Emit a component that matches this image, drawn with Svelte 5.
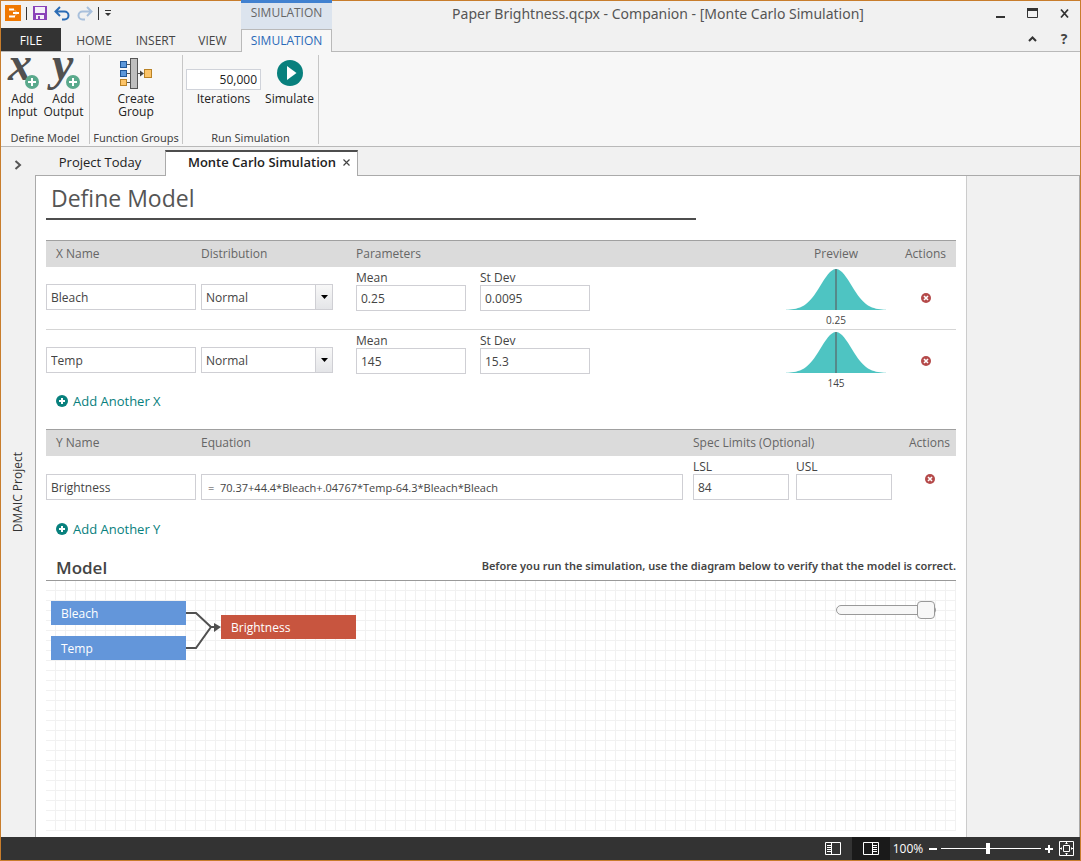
<script>
  let xRows = $state([
    { id: 'bleach', name: 'Bleach', dist: 'Normal', mean: '0.25', sd: '0.0095' },
    { id: 'temp', name: 'Temp', dist: 'Normal', mean: '145', sd: '15.3' }
  ]);
  let yRow = $state({
    name: 'Brightness',
    equation: '=  70.37+44.4*Bleach+.04767*Temp-64.3*Bleach*Bleach',
    lsl: '84',
    usl: ''
  });
  let iterations = $state('50,000');
  let zoom = $state(100);
  let diagramZoom = $state(100);

  const points = [];
  for (let x = 0; x <= 100; x += 2) {
    const z = (x - 50) / 15.3;
    points.push(`${x},${(41 - 41 * Math.exp((-z * z) / 2)).toFixed(2)}`);
  }
  const bell = `M0,41 L${points.join(' ')} L100,41 Z`;
</script>

{#snippet addBadge(x, y)}
  <circle cx={x} cy={y} r="7" fill="#5aa98c" />
  <path d="M{x - 4} {y}h8M{x} {y - 4}v8" stroke="#fff" stroke-width="2" />
{/snippet}

{#snippet removeIcon()}
  <svg width="10" height="10" viewBox="0 0 10 10" aria-hidden="true">
    <circle cx="5" cy="5" r="5" fill="#b54a4a" />
    <path d="M3 3l4 4M7 3l-4 4" stroke="#fff" stroke-width="1.600" />
  </svg>
{/snippet}

{#snippet plusIcon()}
  <svg width="12" height="12" viewBox="0 0 12 12" aria-hidden="true">
    <circle cx="6" cy="6" r="6" fill="#08807d" />
    <path d="M3 6h6M6 3v6" stroke="#fff" stroke-width="2" />
  </svg>
{/snippet}

<div class="window">
  <header class="titlebar">
    <div class="quick">
      <svg width="16" height="16" viewBox="0 0 16 16" aria-hidden="true">
        <rect width="16" height="16" fill="#f07800" />
        <path d="M4 4.500h5M8 8h6M4 11.500h6" stroke="#fff" stroke-width="2" />
        <path d="M9 4.500l3 3M9 11.500l3-3" stroke="#fff" stroke-width="1" opacity="0.500" />
      </svg>
      <i class="bar"></i>
      <button aria-label="Save" class="save">
        <svg width="14" height="14" viewBox="0 0 14 14">
          <path d="M0 0h14v14H0z" fill="#8a43b8" />
          <path d="M2 1h10v6H2zM3 9h8v4H3z" fill="#f4f0f8" />
          <path d="M5 10h2v3H5z" fill="#8a43b8" />
        </svg>
      </button>
      <button aria-label="Undo">
        <svg width="17" height="15" viewBox="0 0 17 15" fill="none" stroke="#2b6cb5" stroke-width="2">
          <path d="M6 1L1.500 5.500L6 10M2 5.500h8.500a4 4 0 0 1 0 8H8" />
        </svg>
      </button>
      <button aria-label="Redo">
        <svg width="17" height="15" viewBox="0 0 17 15" fill="none" stroke="#a9c0dc" stroke-width="2">
          <path d="M11 1l4.500 4.500L11 10M15 5.500H6.500a4 4 0 0 0 0 8H9" />
        </svg>
      </button>
      <i class="bar"></i>
      <button aria-label="Customize toolbar" class="more">
        <svg width="6" height="7" viewBox="0 0 6 7"><path d="M0 0h6v1H0zM0 3h6L3 6z" fill="#333" /></svg>
      </button>
    </div>
    <div class="context">SIMULATION</div>
    <div class="title">Paper Brightness.qcpx - Companion - [Monte Carlo Simulation]</div>
    <div class="controls">
      <button aria-label="Minimize"><svg width="11" height="11" viewBox="0 0 11 11"><path d="M1 8h9v2H1z" fill="#333" /></svg></button>
      <button aria-label="Maximize"><svg width="11" height="11" viewBox="0 0 11 11"><path d="M.5.500h10v9H.5z" fill="none" stroke="#333" /><path d="M0 0h11v3H0z" fill="#333" /></svg></button>
      <button aria-label="Close"><svg width="11" height="11" viewBox="0 0 11 11"><path d="M2 1.500l7 8M9 1.500l-7 8" stroke="#333" stroke-width="1.800" /></svg></button>
    </div>
  </header>

  <nav class="tabs">
    <button class="file">FILE</button>
    <button class="home">HOME</button>
    <button>INSERT</button>
    <button>VIEW</button>
    <button class="current">SIMULATION</button>
    <div class="controls push">
      <button aria-label="Collapse ribbon"><svg width="9" height="6" viewBox="0 0 9 6"><path d="M1 5l3.500-3.500L8 5" fill="none" stroke="#333" stroke-width="2" /></svg></button>
      <button class="help">?</button>
    </div>
  </nav>

  <section class="ribbon">
    <div class="group model">
      <div class="tools">
        <button>
          <svg width="32" height="37" viewBox="0 0 32 37" aria-hidden="true">
            <text x="1" y="25" class="glyph">x</text>
            {@render addBadge(25, 27)}
          </svg>
          <span>Add<br />Input</span>
        </button>
        <button>
          <svg width="32" height="37" viewBox="0 0 32 37" aria-hidden="true">
            <text x="4" y="25" class="glyph">y</text>
            {@render addBadge(25, 27)}
          </svg>
          <span>Add<br />Output</span>
        </button>
      </div>
      <h3>Define Model</h3>
    </div>
    <div class="group functions">
      <div class="tools">
        <button>
          <svg width="34" height="37" viewBox="0 1 34 37" aria-hidden="true">
            <path d="M7 10.500h4M7 19.500h4M7 28.500h4M18 19.500h5" stroke="#555" />
            <path d="M21 16.500l4 3-4 3z" fill="#444" />
            <rect x="11.500" y="4.500" width="7" height="30" fill="#bfbfbf" stroke="#555" />
            <rect x="1.500" y="7.500" width="6" height="6" fill="#5b97da" stroke="#1f5697" />
            <rect x="1.500" y="16.500" width="6" height="6" fill="#5b97da" stroke="#1f5697" />
            <rect x="1.500" y="25.500" width="6" height="6" fill="#fcc468" stroke="#b98226" />
            <rect x="25.500" y="15.500" width="7" height="8" fill="#fcc468" stroke="#b98226" />
          </svg>
          <span>Create<br />Group</span>
        </button>
      </div>
      <h3>Function Groups</h3>
    </div>
    <div class="group run">
      <div class="tools">
        <div class="iterations">
          <input id="iterations" bind:value={iterations} />
          <label for="iterations">Iterations</label>
        </div>
        <button class="simulate">
          <svg width="32" height="37" viewBox="0 0 32 37" aria-hidden="true">
            <circle cx="16" cy="18" r="13" fill="#08807d" />
            <path d="M13 11l9.500 7L13 25z" fill="#fff" />
          </svg>
          <span>Simulate</span>
        </button>
      </div>
      <h3>Run Simulation</h3>
    </div>
  </section>

  <div class="body">
    <aside class="side">
      <button aria-label="Expand panel" class="expand">
        <svg width="8" height="10" viewBox="0 0 8 10"><path d="M1.500 1L6 5l-4.500 4" fill="none" stroke="#555" stroke-width="2" /></svg>
      </button>
      <span class="project">DMAIC Project</span>
    </aside>

    <main>
      <div class="docs">
        <button class="doc">Project Today</button>
        <div class="doc open">
          <b>Monte Carlo Simulation</b>
          <button aria-label="Close tab"><svg width="7" height="7" viewBox="0 0 7 7"><path d="M.5.500l6 6M6.500.500l-6 6" stroke="#444" stroke-width="1.200" /></svg></button>
        </div>
      </div>

      <div class="page">
        <div class="sheet">
          <h1>Define Model</h1>

          <table class="xs">
            <colgroup><col class="c-name" /><col class="c-name" /><col /><col class="c-preview" /><col class="c-xact" /></colgroup>
            <thead>
              <tr><th class="first">X Name</th><th>Distribution</th><th>Parameters</th><th class="mid">Preview</th><th class="mid">Actions</th></tr>
            </thead>
            <tbody>
              {#each xRows as row (row.id)}
                <tr>
                  <td class="drop"><input class="name" aria-label="X name" bind:value={row.name} /></td>
                  <td class="drop">
                    <div class="pick">
                      <select aria-label="Distribution" bind:value={row.dist}><option>Normal</option></select>
                      <span class="arrow"><svg width="7" height="4" viewBox="0 0 7 4"><path d="M0 0h7L3.500 4z" fill="#000" /></svg></span>
                    </div>
                  </td>
                  <td>
                    <div class="fields wide">
                      <div><label for="mean-{row.id}">Mean</label><input id="mean-{row.id}" bind:value={row.mean} /></div>
                      <div><label for="sd-{row.id}">St Dev</label><input id="sd-{row.id}" bind:value={row.sd} /></div>
                    </div>
                  </td>
                  <td class="preview">
                    <svg width="100" height="41" viewBox="0 0 100 41" aria-hidden="true">
                      <path d={bell} fill="#4ec4c2" />
                      <path d="M50 0v41" stroke="#55898a" stroke-width="2" />
                    </svg>
                    <span>{row.mean}</span>
                  </td>
                  <td class="act"><button aria-label="Remove {row.name}">{@render removeIcon()}</button></td>
                </tr>
              {/each}
            </tbody>
          </table>
          <button class="add">{@render plusIcon()}Add Another X</button>

          <table class="ys">
            <colgroup><col class="c-name" /><col /><col class="c-spec" /><col class="c-yact" /></colgroup>
            <thead>
              <tr><th class="first">Y Name</th><th>Equation</th><th>Spec Limits (Optional)</th><th class="mid">Actions</th></tr>
            </thead>
            <tbody>
              <tr>
                <td class="drop"><input class="name" aria-label="Y name" bind:value={yRow.name} /></td>
                <td class="drop eq"><input aria-label="Equation" bind:value={yRow.equation} /></td>
                <td>
                  <div class="fields">
                    <div><label for="lsl">LSL</label><input id="lsl" bind:value={yRow.lsl} /></div>
                    <div><label for="usl">USL</label><input id="usl" bind:value={yRow.usl} /></div>
                  </div>
                </td>
                <td class="act"><button aria-label="Remove {yRow.name}">{@render removeIcon()}</button></td>
              </tr>
            </tbody>
          </table>
          <button class="add">{@render plusIcon()}Add Another Y</button>

          <div class="modelhead">
            <h2>Model</h2>
            <p>Before you run the simulation, use the diagram below to verify that the model is correct.</p>
          </div>
          <div class="canvas">
            <svg class="links" width="40" height="60" viewBox="0 0 40 60" aria-hidden="true">
              <path d="M0 13h10l15 14M0 48h10l15-21h4" fill="none" stroke="#505050" stroke-width="2" />
              <path d="M28 23l7 4-7 5z" fill="#505050" />
            </svg>
            <div class="node bleach">{xRows[0].name}</div>
            <div class="node temp">{xRows[1].name}</div>
            <div class="node result">{yRow.name}</div>
            <input class="scale" type="range" min="0" max="100" aria-label="Diagram zoom" bind:value={diagramZoom} />
          </div>
        </div>
        <div class="blank"></div>
      </div>
    </main>
  </div>

  <footer>
    <button aria-label="Left pane view">
      <svg width="16" height="13" viewBox="0 0 16 13" stroke="#fff" fill="none"><path d="M.5.500h15v12H.5zM6.500.500v12M2 3.500h4M2 5.500h4M2 7.500h4M2 9.500h4" /></svg>
    </button>
    <button aria-label="Right pane view" class="on">
      <svg width="16" height="13" viewBox="0 0 16 13" stroke="#fff" fill="none"><path d="M.5.500h15v12H.5zM9.500.500v12M10 3.500h4M10 5.500h4M10 7.500h4M10 9.500h4" /></svg>
    </button>
    <span class="pct">{zoom}%</span>
    <button aria-label="Zoom out" class="step"><svg width="8" height="8" viewBox="0 0 8 8"><path d="M0 4h8" stroke="#fff" stroke-width="2" /></svg></button>
    <input class="zoom" type="range" min="0" max="213" aria-label="Zoom" bind:value={zoom} />
    <button aria-label="Zoom in" class="step"><svg width="8" height="8" viewBox="0 0 8 8"><path d="M0 4h8M4 0v8" stroke="#fff" stroke-width="2" /></svg></button>
    <button aria-label="Fit to window" class="fit">
      <svg width="15" height="15" viewBox="0 0 15 15" stroke="#fff" fill="none"><path d="M.5.500h14v14H.5zM4.500 4.500h6v6h-6zM7.500 1v2M7.500 12v2M1 7.500h2M12 7.500h2" /><path d="M6 2.500h3M6 12.500h3M2.500 6v3M12.500 6v3" opacity="0.600" /></svg>
    </button>
  </footer>
</div>

<style>
  :global(body) { margin: 0; }
  .window, .window * { box-sizing: border-box; }
  .window {
    display: flex;
    flex-direction: column;
    min-height: 100vh;
    border: 1px solid #c87d2c;
    background: #f1f1f1;
    color: #444;
    font: 12px/16px "Open Sans", "Noto Sans", sans-serif;
  }
  button, input, select { font: inherit; color: inherit; margin: 0; }
  button { padding: 0; border: 0; background: none; display: flex; align-items: center; justify-content: center; }
  svg { display: block; flex: none; overflow: visible; }
  h1, h2, h3, p { margin: 0; font-weight: 400; }

  .titlebar { display: flex; height: 27px; }
  .quick { display: flex; align-items: center; width: 240px; padding: 0 0 3px 4px; gap: 5px; }
  .quick .bar { width: 1px; height: 13px; background: #333; }
  .quick .save { margin: 0 2px 0 1px; }
  .quick .more { margin-left: 1px; }
  .context { width: 91px; background: #dce4ee; border-top: 3px solid #4181d0; text-align: center; line-height: 19px; color: #666; margin: -1px 0; }
  .title { flex: 1; text-align: center; font: 14px/26px "Noto Sans", sans-serif; color: #555; white-space: nowrap; }
  .controls { display: flex; width: 96px; padding-bottom: 2px; }
  .controls button { width: 32px; }
  .push { margin-left: auto; width: 64px; }
  .help { font-size: 14px; font-weight: 700; }

  .tabs { display: flex; height: 24px; border-bottom: 1px solid #b9b9b9; }
  .tabs > button { width: 57px; padding-top: 2px; }
  .tabs > .file { width: 60px; background: #333; color: #fff; }
  .tabs > .home { width: 66px; }
  .tabs > .current { width: 91px; height: 23px; margin-top: 1px; padding: 0; background: #f7f7f7; border: 1px solid #b9b9b9; border-bottom: 0; color: #2b6ab8; }

  .ribbon { display: flex; height: 95px; padding: 3px 0 2px; background: #f7f7f7; border-bottom: 1px solid #b9b9b9; }
  .group { display: flex; flex-direction: column; justify-content: space-between; border-right: 1px solid #c6c6c6; color: #222; line-height: 13px; }
  .model { width: 89px; }
  .functions { width: 93px; }
  .run { width: 136px; }
  .tools { display: flex; justify-content: center; }
  .tools button { flex-direction: column; justify-content: flex-start; }
  .model .tools { padding-right: 4px; }
  .run .tools { padding-left: 2px; }
  .model .tools button { width: 41px; }
  .group h3 { font: 11px/13px "Noto Sans", sans-serif; text-align: center; color: #444; white-space: nowrap; }
  .glyph { font: italic bold 48px "Liberation Serif", serif; fill: #505050; }
  .iterations { display: flex; flex-direction: column; align-items: center; padding-top: 14px; width: 76px; }
  .iterations input { width: 75px; height: 21px; padding: 0 3px; border: 1px solid #d0d3da; background: #fff; text-align: right; }
  .iterations label { margin-top: 2px; }
  .simulate { width: 56px; }

  .body { flex: 1; display: flex; }
  .side { width: 34px; display: flex; flex-direction: column; align-items: center; justify-content: center; position: relative; }
  .expand { position: absolute; top: 13px; left: 13px; }
  .project { writing-mode: vertical-rl; transform: rotate(180deg); color: #333; }
  main { flex: 1; min-width: 0; display: flex; flex-direction: column; }
  .docs { display: flex; height: 28px; }
  .doc { width: 130px; padding-top: 2px; font-size: 13px; color: #222; }
  .open { display: flex; align-items: center; justify-content: flex-end; gap: 7px; width: 193px; margin-top: 3px; padding: 0 7px 4px 0; height: 26px; position: relative; background: #fff; border: 1px solid #aaa; border-top: 2px solid #4d4d4d; border-bottom: 0; }
  .open b { font-weight: 600; white-space: nowrap; }
  .page { flex: 1; display: flex; border: 1px solid #aaa; border-bottom: 0; }
  .sheet { flex: 1; min-width: 0; padding: 0 10px 5px; background: #fff; border-right: 1px solid #ccc; }
  .blank { width: 112px; }
  h1 { max-width: 650px; height: 44px; padding-left: 5px; font-size: 23px; line-height: 44px; color: #555; border-bottom: 2px solid #4d4d4d; }

  table { width: 100%; table-layout: fixed; border-collapse: separate; border-spacing: 0; }
  .xs { margin-top: 20px; }
  .ys { margin-top: 19px; }
  .c-name { width: 155px; }
  .c-preview { width: 118px; }
  .c-xact { width: 61px; }
  .c-spec { width: 210px; }
  .c-yact { width: 53px; }
  th { height: 27px; padding: 0; border-top: 1px solid #a0a0a0; background: #dbdbdb; color: #666; font-weight: 400; text-align: left; white-space: nowrap; }
  .first { padding-left: 10px; }
  th.mid { text-align: center; }
  td { height: 63px; padding: 2px 0 0; vertical-align: top; }
  tbody tr + tr td { height: 62px; }
  tr:not(:last-child) > td { border-bottom: 1px solid #d5d5d5; }
  .drop { padding-top: 17px; }
  .ys .drop { padding-top: 18px; }
  .ys td { height: 64px; }
  td input { display: block; height: 26px; padding: 0 4px; border: 1px solid #cfcfd4; background: #fff; }
  td .name { width: 150px; }
  .eq { padding-right: 10px; }
  .eq input { width: 100%; padding-left: 6px; font-size: 11px; }
  .pick { position: relative; width: 132px; }
  .pick select { appearance: none; display: block; width: 100%; height: 26px; padding: 1px 22px 0 4px; border: 1px solid #cfcfd4; border-radius: 0; background: #fff; }
  .arrow { position: absolute; inset: 1px 1px 1px auto; width: 17px; display: flex; align-items: center; justify-content: center; border-left: 1px solid #cfcfd4; background: linear-gradient(#f8f8f8, #e4e5e8); pointer-events: none; }
  .fields { display: flex; gap: 7px; }
  .fields input { width: 96px; }
  .fields label { display: block; height: 16px; line-height: 18px; }
  .wide { gap: 14px; }
  .wide input { width: 110px; }
  .preview svg { margin: 0 auto; }
  .preview span { display: block; height: 18px; text-align: center; font-size: 10px; line-height: 20px; }
  .act { padding-top: 26px; }
  .ys .act { padding-top: 18px; }
  .act button { margin: 0 auto; }
  .add { gap: 5px; height: 18px; margin-left: 10px; font-size: 13px; color: #08807d; }

  .modelhead { display: flex; justify-content: space-between; align-items: flex-start; height: 43px; padding: 18px 0 0 10px; border-bottom: 1px solid #999; }
  h2 { font-size: 17px; font-weight: 600; line-height: 24px; }
  .modelhead p { font: 600 11px/20px "Noto Sans", sans-serif; }
  .canvas { position: relative; height: 250px; background-image: linear-gradient(to top, #f1f1f1 1px, transparent 1px), linear-gradient(to left, #f1f1f1 1px, transparent 1px); background-size: 10px 10px; }
  .node { position: absolute; width: 135px; height: 24px; padding-left: 10px; line-height: 25px; color: #fff; background: #6396da; }
  .bleach { left: 5px; top: 20px; }
  .temp { left: 5px; top: 55px; }
  .result { left: 175px; top: 34px; background: #c8553f; }
  .links { position: absolute; left: 140px; top: 19px; }
  .scale { appearance: none; position: absolute; top: 20px; right: 20px; width: 100px; height: 18px; margin: 0; background: none; }
  .scale::-webkit-slider-runnable-track { height: 10px; border: 1px solid #999; border-radius: 5px; background: #f7f7f7; }
  .scale::-webkit-slider-thumb { appearance: none; width: 18px; height: 18px; margin: -5px -1px 0 0; border: 1px solid #999; border-radius: 4px; background: #f7f7f7; }

  footer { display: flex; align-items: center; justify-content: flex-end; height: 23px; padding-right: 6px; background: #333; color: #fff; }
  footer button { width: 38px; height: 23px; }
  footer .on { background: #1a1a1a; }
  footer .pct { width: 36px; text-align: center; white-space: nowrap; }
  footer .step { width: 14px; }
  footer .fit { width: 16px; margin-left: 2px; }
  .zoom { appearance: none; width: 100px; height: 13px; margin: 0 1px; background: linear-gradient(#fff, #fff) center / 100% 1px no-repeat; }
  .zoom::-webkit-slider-thumb { appearance: none; width: 4px; height: 11px; background: #fff; }
</style>
